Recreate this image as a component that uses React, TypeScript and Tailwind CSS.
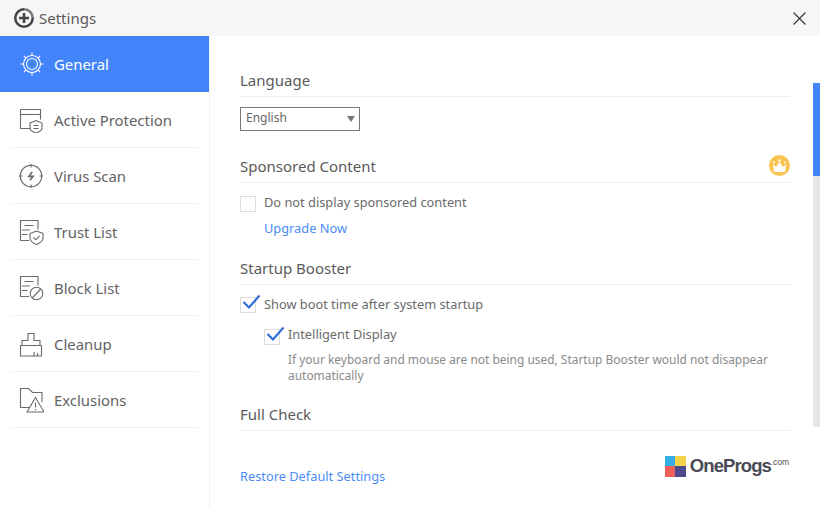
import React from "react";

const S = { fill: "none", stroke: "currentColor", strokeWidth: 1.1 };

function Ic({ children }: { children: React.ReactNode }) {
  return (
    <svg width="26" height="26" viewBox="0 0 26 26" className="shrink-0" {...S}>
      {children}
    </svg>
  );
}

const icons: Record<string, React.ReactNode> = {
  General: (
    <Ic>
      <circle cx="13" cy="13" r="8.500" />
      <circle cx="13" cy="13" r="5.500" />
      <path d="M13 1.500V4M13 22v2.500M1.500 13H4M22 13h2.500M5 5l1.600 1.600M19.400 19.400 21 21M5 21l1.600-1.600M19.400 6.600 21 5" />
    </Ic>
  ),
  "Active Protection": (
    <Ic>
      <path d="M12.500 21.500H2.500V2.500h20v10" />
      <path d="M2.500 7.500h20" />
      <path d="M12 16l6-2.500 6 2.500v5c0 2.300-2.800 4-6 5-3.200-1-6-2.700-6-5z" />
      <path d="M15.500 18.500h5M15.500 21.500h5" />
    </Ic>
  ),
  "Virus Scan": (
    <Ic>
      <circle cx="13" cy="13" r="10.800" />
      <path d="M13 1v3.500M13 21.500V25M1 13h3.500M21.500 13H25" />
      <path d="M14.200 9 11 13.300h4l-3 4" strokeWidth="1.700" />
    </Ic>
  ),
  "Trust List": (
    <Ic>
      <path d="M11 21.500H2.500V1.500H20v9" />
      <path d="M6.500 6.500h9M4 11h8M4 15.500h5.500" />
      <path d="M12 14.500 18.500 12l6.500 2.500v4.500c0 3-3 5-6.500 6.500-3.500-1.500-6.500-3.500-6.500-6.500z" />
      <path d="M15.500 18.500l2.300 2.300 3.700-4" />
    </Ic>
  ),
  "Block List": (
    <Ic>
      <path d="M11 21.500H2.500V1.500H20v9" />
      <path d="M6.500 6.500h9M4 11h8M4 15.500h5.500" />
      <circle cx="18.500" cy="18.500" r="6.300" />
      <path d="M14.200 23 22.800 14" />
    </Ic>
  ),
  Cleanup: (
    <Ic>
      <path d="M10 9.500V2.500h6v7h6v5H4v-5z" />
      <path d="M2.500 14.500h21V25h-21z" />
      <path d="M16 25v-4M19.500 25v-3" />
    </Ic>
  ),
  Exclusions: (
    <Ic>
      <path d="M11.500 20.500h-9V1.500h8l4 4h9.500v9.500" />
      <path d="M17.500 10.500 9 25h17z" />
      <path d="M17.500 15.500v5M17.500 22v1.200" />
    </Ic>
  ),
};

const navItems = ["General", "Active Protection", "Virus Scan", "Trust List", "Block List", "Cleanup", "Exclusions"];

function Section({ title, right, className, children }: { title: string; right?: React.ReactNode; className?: string; children?: React.ReactNode }) {
  return (
    <section className={className}>
      <div className="flex h-[27px] items-start justify-between border-b border-[#eeeeee] text-[15px] leading-[20px] text-[#5a5a5a]">
        <span>{title}</span>
        {right}
      </div>
      {children}
    </section>
  );
}

function Check({ checked, label, labelClass }: { checked?: boolean; label: string; labelClass: string }) {
  return (
    <label className="flex items-center gap-2 text-[12.8px] text-[#6a6a6a]">
      <span className="relative h-4 w-4 shrink-0 border border-[#dddddd] bg-white">
        {checked && (
          <svg width="20" height="16" viewBox="0 0 20 16" className="absolute -top-[4px] left-px">
            <path d="M1.500 8 7 13.500 17.500 1.500" fill="none" stroke="#2f6fd6" strokeWidth="2.200" />
          </svg>
        )}
      </span>
      <span className={labelClass}>{label}</span>
    </label>
  );
}

export default function App() {
  return (
    <div className="flex h-[508px] w-[820px] flex-col overflow-hidden bg-white font-['Noto_Sans','Open_Sans',sans-serif] text-[#555555]">
      <header className="flex h-9 shrink-0 items-center justify-between bg-[#f6f6f6] pl-[14px] pr-[14px]">
        <div className="flex items-center gap-[5px]">
          <svg width="20" height="20" viewBox="0 0 20 20">
            <path d="M10 0a10 10 0 1 0 10 10h-2.500A7.500 7.500 0 1 1 10 2.500z" fill="#444444" />
            <path d="M10 2.500A7.500 7.500 0 0 1 17.500 10H20A10 10 0 0 0 10 0z" fill="#777777" />
            <path d="M10 5v10M5 10h10" stroke="#444444" strokeWidth="2.600" />
          </svg>
          <span className="text-[15px] text-[#5a5a5a]">Settings</span>
        </div>
        <svg width="13" height="13" viewBox="0 0 13 13" stroke="#333333" strokeWidth="1.100">
          <path d="M.5.5l12 12M12.500.5l-12 12" />
        </svg>
      </header>
      <div className="flex min-h-0 flex-1">
        <nav className="w-[210px] shrink-0 border-r border-[#f0f0f0]">
          {navItems.map((n) => {
            const active = n === "General";
            return (
              <div
                key={n}
                className={
                  active
                    ? "flex h-14 items-center gap-[9px] bg-[#4285fb] pl-[19px] text-[14.9px] text-white"
                    : "mx-[10px] flex h-14 items-center gap-[10px] border-b border-[#f2f2f2] pl-[8px] text-[14.9px] text-[#636363]"
                }
              >
                <span className={active ? "text-white" : "text-[#6a6a6a]"}>{icons[n]}</span>
                <span className={active ? "" : "mt-px"}>{n}</span>
              </div>
            );
          })}
        </nav>
        <main className="relative flex min-w-0 flex-1 flex-col pl-[30px] pr-[30px] pt-[34px]">
          <Section title="Language">
            <div className="mt-[10px] flex h-6 w-[120px] items-center justify-between border border-[#777777] pl-[5px] pr-[4px] text-[12px] text-[#666666]">
              <span className="-mt-[2px]">English</span>
              <span className="h-0 w-0 border-x-[4px] border-t-[6px] border-x-transparent border-t-[#777777]" />
            </div>
          </Section>
          <Section
            className="mt-[25px]"
            title="Sponsored Content"
            right={
              <span className="-mt-[1px] flex h-[21px] w-[21px] items-center justify-center rounded-full bg-[#fac450]">
                <svg width="15" height="14" viewBox="0 0 15 14" fill="white">
                  <path d="M1 5.500l3.200 2.500 3.300-5 3.300 5L14 5.500 13 13H2z" />
                  <circle cx="7.500" cy="1.500" r="1.200" />
                  <circle cx="2" cy="3.500" r="1" />
                  <circle cx="13" cy="3.500" r="1" />
                </svg>
              </span>
            }
          >
            <div className="mt-[12px]">
              <Check label="Do not display sponsored content" labelClass="-mt-[2px]" />
            </div>
            <div className="mt-[7px] pl-6 text-[12.8px] text-[#4a8cf7]">Upgrade Now</div>
          </Section>
          <Section className="mt-[20px]" title="Startup Booster">
            <div className="mt-[10px]">
              <Check checked label="Show boot time after system startup" labelClass="" />
            </div>
            <div className="mt-[14px] pl-6">
              <Check checked label="Intelligent Display" labelClass="-mt-[4px]" />
              <p className="mt-[7px] pl-6 text-[11.95px] leading-[16px] text-[#8a8a8a]">
                If your keyboard and mouse are not being used, Startup Booster would not disappear automatically
              </p>
            </div>
          </Section>
          <Section className="mt-[20px]" title="Full Check" />
          <div className="mt-[31px] flex items-start justify-between">
            <span className="mt-[5px] text-[12.8px] text-[#4a8cf7]">Restore Default Settings</span>
            <div className="-mt-[6px] mr-px flex items-center gap-[4px]">
              <span className="grid h-[21px] w-[21px] grid-cols-2 grid-rows-2">
                <span className="bg-[#35aee8]" />
                <span className="bg-[#f7d34a]" />
                <span className="bg-[#f0605a]" />
                <span className="bg-[#4c4a8c]" />
              </span>
              <span className="relative pr-[18px] font-['Liberation_Sans',sans-serif] text-[18.5px] font-bold leading-5 tracking-[-0.9px] text-[#4a4a55]">
                OneProgs
                <span className="absolute top-0 right-0 text-[8.5px] font-normal leading-3 tracking-normal">.com</span>
              </span>
            </div>
          </div>
          <div className="absolute right-0 top-[47px] h-[344px] w-[7px] bg-[#e6e6e6]">
            <div className="h-[93px] bg-[#4285fb]" />
          </div>
        </main>
      </div>
    </div>
  );
}
